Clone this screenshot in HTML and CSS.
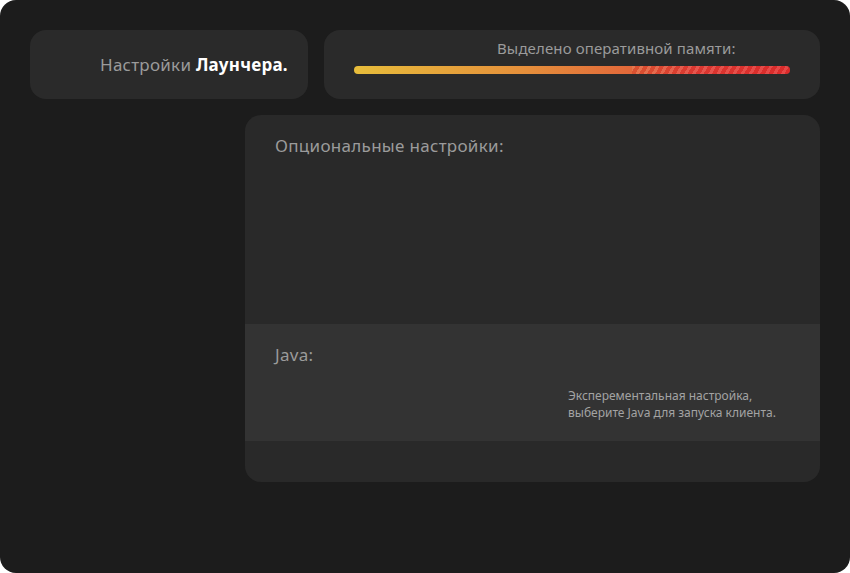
FILE: index.html
```html
<!DOCTYPE html>
<html lang="ru">
<head>
<meta charset="utf-8">
<title>Настройки лаунчера</title>
<link rel="stylesheet" href="styles.css">
</head>
<body>
<div class="window">
  <div class="top-row">
    <div class="card title-card">
      <span class="title">Настройки <b>Лаунчера.</b></span>
    </div>
    <div class="card memory-card">
      <div class="memory-label">Выделено оперативной памяти:</div>
      <div class="bar"><div class="bar-stripes"></div></div>
    </div>
  </div>
  <div class="panel">
    <div class="section optional">
      <div class="section-title">Опциональные настройки:</div>
    </div>
    <div class="section java">
      <div class="section-title">Java:</div>
      <div class="note">
        <div class="note-line">Эксперементальная настройка,</div>
        <div class="note-line">выберите Java для запуска клиента.</div>
      </div>
    </div>
    <div class="section footer"></div>
  </div>
</div>
</body>
</html>
```

FILE: styles.css
```css
html, body {
  margin: 0;
  padding: 0;
  background: #ffffff;
}
body {
  font-family: "Noto Sans", "Liberation Sans", sans-serif;
}
.window {
  width: 850px;
  height: 573px;
  box-sizing: border-box;
  background: #1c1c1c;
  border-radius: 16px;
  padding: 30px 30px 0 30px;
  overflow: hidden;
}
.top-row {
  display: grid;
  grid-template-columns: 278px 496px;
  column-gap: 16px;
  height: 69px;
}
.card {
  background: #2a2a2a;
  border-radius: 16px;
}
.title-card {
  display: flex;
  align-items: center;
  padding-left: 70px;
}
.title {
  font-size: 17px;
  letter-spacing: 0.25px;
  color: #9b9b9b;
}
.title b {
  color: #ffffff;
  font-weight: 700;
}
.memory-card {
  display: flex;
  flex-direction: column;
  padding: 9px 30px 0 30px;
}
.memory-label {
  font-size: 15px;
  letter-spacing: 0.12px;
  line-height: 18px;
  color: #9b9b9b;
  padding-left: 143px;
}
.bar {
  margin-top: 9px;
  height: 8px;
  border-radius: 4px;
  background: linear-gradient(90deg, #e7bd3b 0%, #e58e3b 40%, #e2693a 63%, #e3433a 78%, #e33232 100%);
  display: flex;
  justify-content: flex-end;
  overflow: hidden;
}
.bar-stripes {
  width: 158px;
  height: 100%;
  background: repeating-linear-gradient(120deg, rgba(255,255,255,0.10) 0 3px, rgba(190,20,20,0.25) 3px 7px);
}
.panel {
  margin: 16px 0 0 215px;
  width: 575px;
  height: 367px;
  border-radius: 16px;
  overflow: hidden;
  background: #292929;
  display: flex;
  flex-direction: column;
}
.section {
  box-sizing: border-box;
  padding: 21px 30px 0 30px;
}
.optional {
  height: 209px;
}
.java {
  height: 117px;
  background: #333333;
}
.footer {
  flex: 1;
}
.section-title {
  font-size: 17px;
  letter-spacing: 0.3px;
  line-height: 20px;
  color: #9b9b9b;
}
.note {
  margin: 22px 0 0 293px;
  font-size: 12px;
  color: #a3a3a3;
  display: flex;
  flex-direction: column;
}
.note-line {
  line-height: 17px;
}
```
